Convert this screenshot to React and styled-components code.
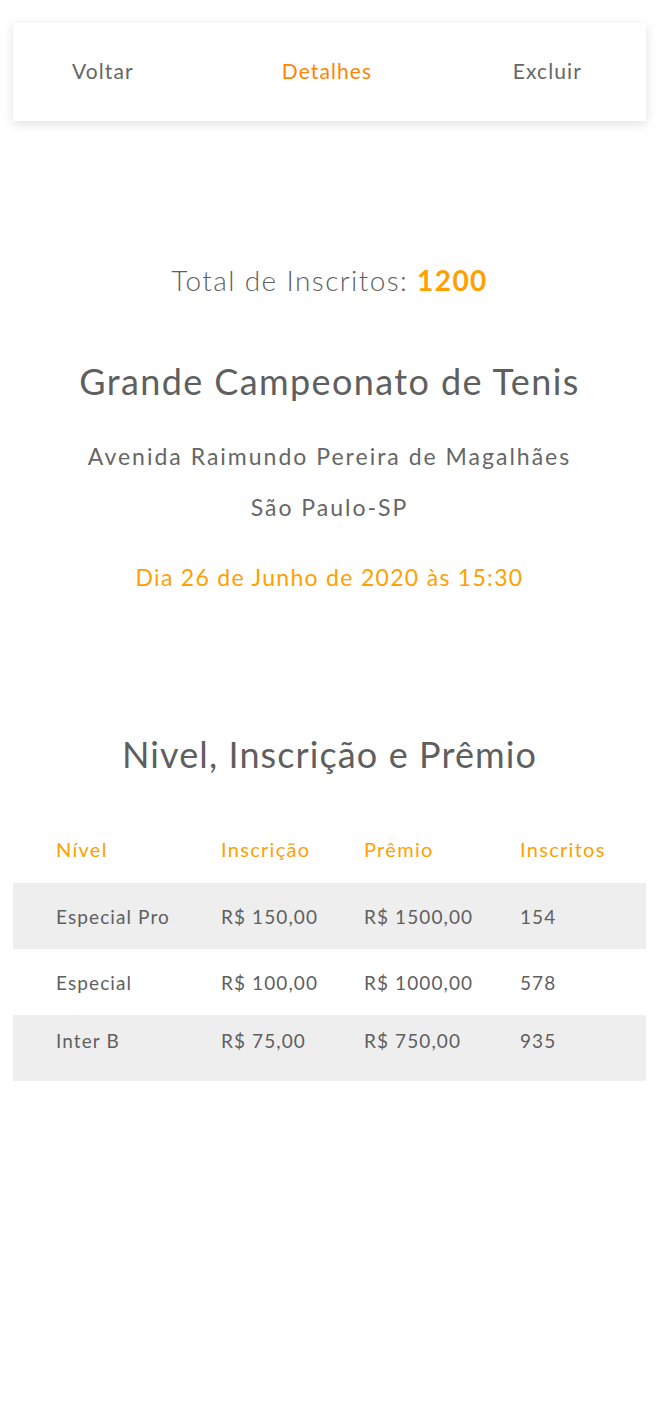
import React from "react";
import styled, { createGlobalStyle } from "styled-components";

const Global = createGlobalStyle`
  html, body { margin: 0; padding: 0; background: #fff; }
  body { font-family: Lato, "Open Sans", sans-serif; color: #616161; }
`;

const Page = styled.div`
  display: flex;
  flex-direction: column;
  padding: 23px 14px 0 13px;
`;

const NavCard = styled.nav`
  height: 98px;
  display: grid;
  grid-template-columns: 1fr auto 1fr;
  align-items: center;
  padding: 0 64px 0 59px;
  background: #fff;
  box-shadow: 0 3px 10px rgba(0, 0, 0, 0.12);
`;

const NavItem = styled.a`
  justify-self: ${(p) => p.$align || "center"};
  font-size: 21px;
  letter-spacing: 1.1px;
  line-height: 26px;
  margin-top: -2px;
  color: ${(p) => (p.$active ? "#ff8400" : "#666")};
  text-decoration: none;
  cursor: pointer;
`;

const Info = styled.section`
  display: flex;
  flex-direction: column;
  align-items: center;
  text-align: center;
  margin-top: 139px;
`;

const Total = styled.div`
  font-size: 28px;
  line-height: 40px;
  letter-spacing: 1.4px;
  font-weight: 300;
  color: #5f5f5f;
`;

const Count = styled.span`
  color: #ffa000;
  font-weight: 700;
`;

const Title = styled.h1`
  margin: ${(p) => p.$mt}px 0 0;
  font-size: 36px;
  line-height: 44px;
  letter-spacing: ${(p) => p.$ls}px;
  font-weight: 400;
  color: #5f5f5f;
`;

const Address = styled.div`
  margin-top: 28px;
  font-size: 23px;
  line-height: 51px;
  letter-spacing: 2px;
  color: #666;
  font-weight: 400;
`;

const DateLine = styled.div`
  margin-top: 29px;
  font-size: 23px;
  line-height: 30px;
  letter-spacing: 1.3px;
  color: #ffa000;
`;

const Table = styled.div`
  margin-top: 41px;
  display: flex;
  flex-direction: column;
`;

const Row = styled.div`
  display: grid;
  grid-template-columns: 165px 143px 156px 1fr;
  padding-left: 43px;
  height: 66px;
  align-items: ${(p) => (p.$top ? "start" : "center")};
  padding-top: ${(p) => (p.$top ? "14px" : "0")};
  box-sizing: border-box;
  background: ${(p) => (p.$shaded ? "#eeeeee" : "transparent")};
`;

const Head = styled.span`
  font-size: 20px;
  letter-spacing: 1.3px;
  color: #ffa000;
  font-weight: 400;
  margin-top: -2px;
`;

const Cell = styled.span`
  font-size: 19px;
  letter-spacing: 1.1px;
  color: #5f5f5f;
`;

const rows = [
  ["Especial Pro", "R$ 150,00", "R$ 1500,00", "154"],
  ["Especial", "R$ 100,00", "R$ 1000,00", "578"],
  ["Inter B", "R$ 75,00", "R$ 750,00", "935"],
];

export default function App() {
  return (
    <>
      <Global />
      <Page>
        <NavCard>
          <NavItem $align="start">Voltar</NavItem>
          <NavItem $active>Detalhes</NavItem>
          <NavItem $align="end">Excluir</NavItem>
        </NavCard>
        <Info>
          <Total>
            Total de Inscritos: <Count>1200</Count>
          </Total>
          <Title $mt={59} $ls={1.4}>Grande Campeonato de Tenis</Title>
          <Address>
            Avenida Raimundo Pereira de Magalhães
            <br />
            São Paulo-SP
          </Address>
          <DateLine>Dia 26 de Junho de 2020 às 15:30</DateLine>
          <Title $mt={140} $ls={1.1}>Nivel, Inscrição e Prêmio</Title>
        </Info>
        <Table>
          <Row>
            <Head>Nível</Head>
            <Head>Inscrição</Head>
            <Head>Prêmio</Head>
            <Head>Inscritos</Head>
          </Row>
          {rows.map((r, i) => (
            <Row key={i} $shaded={i !== 1} $top={i === 2}>
              {r.map((c, j) => (
                <Cell key={j}>{c}</Cell>
              ))}
            </Row>
          ))}
        </Table>
      </Page>
    </>
  );
}
